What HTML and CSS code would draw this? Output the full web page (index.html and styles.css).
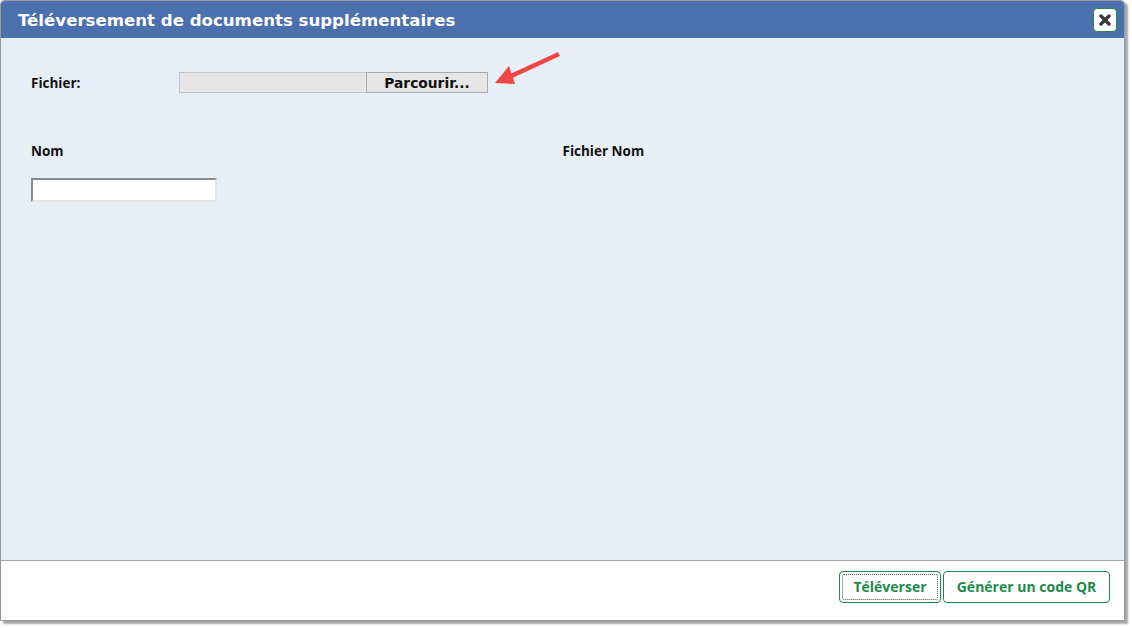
FILE: index.html
```html
<!DOCTYPE html>
<html lang="fr">
<head>
<meta charset="utf-8">
<link rel="stylesheet" href="styles.css">
</head>
<body>
<div class="dialog">
  <div class="header">
    <div class="title">Téléversement de documents supplémentaires</div>
    <button class="close" aria-label="Fermer">
      <svg width="12" height="12" viewBox="0 0 12 12"><path d="M2 2 L10 10 M10 2 L2 10" stroke="#3a3a3a" stroke-width="3.4" stroke-linecap="round"/></svg>
    </button>
  </div>
  <div class="body">
    <div class="file-row">
      <span class="label">Fichier:</span>
      <div class="file-input">
        <div class="file-name"></div>
        <div class="browse">Parcourir...</div>
      </div>
      <svg class="arrow" width="90" height="60" viewBox="0 0 90 60">
        <path d="M79 14 L27 38" stroke="#f24545" stroke-width="4.5"/>
        <path d="M15 43 L29 26 L35 44 Z" fill="#f24545"/>
      </svg>
    </div>
    <div class="cols">
      <div class="col">
        <div class="col-head">Nom</div>
        <input class="name-input" type="text">
      </div>
      <div class="col">
        <div class="col-head">Fichier Nom</div>
      </div>
    </div>
  </div>
  <div class="footer">
    <button class="btn focused">Téléverser</button>
    <button class="btn wide">Générer un code QR</button>
  </div>
</div>
</body>
</html>
```
FILE: styles.css
```css
html, body {
  margin: 0;
  padding: 0;
  background: #ffffff;
}
body {
  width: 1132px;
  height: 628px;
  overflow: hidden;
  font-family: "Open Sans", "Noto Sans", sans-serif;
}
.dialog {
  width: 1125px;
  height: 621px;
  box-sizing: border-box;
  border: 1px solid #9a9a9a;
  border-radius: 4px 4px 0 0;
  box-shadow: 3px 3px 2px rgba(0,0,0,0.35);
  display: flex;
  flex-direction: column;
  background: #e8eef6;
}
.header {
  height: 37px;
  background: #4a71ae;
  border-radius: 4px 4px 0 0;
  display: flex;
  align-items: center;
  justify-content: space-between;
  padding: 0 7px 0 17px;
  flex-shrink: 0;
}
.title {
  color: #ffffff;
  font-family: "DejaVu Sans", Verdana, sans-serif;
  font-weight: bold;
  font-size: 16.6px;
  margin-top: 1px;
}
.close {
  width: 24px;
  height: 24px;
  background: #ffffff;
  border: 1px solid #2a8a4e;
  border-radius: 4px;
  padding: 0;
  display: flex;
  align-items: center;
  justify-content: center;
  margin-top: 1px;
}
.body {
  flex: 1;
  padding: 34px 30px 0 30px;
}
.file-row {
  display: flex;
  align-items: center;
  height: 21px;
  position: relative;
}
.label {
  font-weight: 700;
  font-size: 13.5px;
  color: #111;
  width: 148px;
}
.file-input {
  display: flex;
  height: 21px;
}
.file-name {
  width: 187px;
  height: 21px;
  box-sizing: border-box;
  background: #e6e6e6;
  border: 1px solid #c4c4c4;
  border-right: none;
}
.browse {
  width: 122px;
  height: 21px;
  box-sizing: border-box;
  background: #e6e6e6;
  border: 1px solid #a9a9a9;
  font-family: "DejaVu Sans", Verdana, sans-serif;
  font-weight: bold;
  font-size: 13.8px;
  color: #111;
  display: flex;
  align-items: center;
  justify-content: center;
  padding-top: 1px;
}
.arrow {
  position: absolute;
  left: 449px;
  top: -32px;
}
.cols {
  display: flex;
  margin-top: 49px;
}
.col {
  width: 532px;
  display: flex;
  flex-direction: column;
}
.col-head {
  font-weight: 700;
  font-size: 13.5px;
  color: #111;
  height: 18px;
  line-height: 18px;
}
.name-input {
  margin: 18px 0 0 0;
  width: 186px;
  height: 24px;
  box-sizing: border-box;
  border: 2px solid;
  border-color: #8a8a8a #e4e4e4 #e4e4e4 #8a8a8a;
  background: #ffffff;
  padding: 0;
}
.footer {
  height: 60px;
  flex-shrink: 0;
  background: #ffffff;
  border-top: 1px solid #a8a8a8;
  display: flex;
  justify-content: flex-end;
  align-items: flex-start;
  padding: 10px 14px 0 0;
  gap: 2px;
  box-sizing: border-box;
}
.btn {
  height: 32px;
  background: #ffffff;
  border: 1px solid #1e8a4a;
  border-radius: 4px;
  color: #1e8a4a;
  font-family: "Open Sans", "Noto Sans", sans-serif;
  font-weight: 700;
  font-size: 14px;
  padding: 0 0 1px 0;
  white-space: nowrap;
  position: relative;
}
.btn.focused {
  width: 102px;
}
.btn.focused::after {
  content: "";
  position: absolute;
  left: 2px;
  top: 2px;
  right: 2px;
  bottom: 2px;
  border: 1px dotted #555;
  border-radius: 2px;
}
.btn.wide {
  width: 167px;
}
```
